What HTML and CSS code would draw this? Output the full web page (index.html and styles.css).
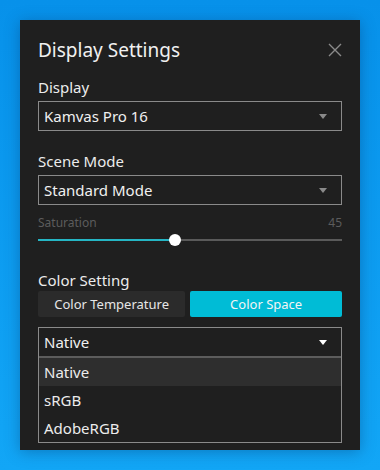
FILE: index.html
```html
<!DOCTYPE html>
<html lang="en">
<head>
    <meta charset="UTF-8">
    <title>Display Settings</title>
    <link rel="stylesheet" href="styles.css">
</head>
<body>
    <div class="panel">
        <header class="panel-header">
            <h1>Display Settings</h1>
            <button class="close-btn" aria-label="Close">
                <svg width="14" height="14" viewBox="0 0 14 14">
                    <path d="M1 1 L13 13 M13 1 L1 13" stroke="#8a8a8a" stroke-width="1.4" fill="none"/>
                </svg>
            </button>
        </header>

        <section class="group">
            <div class="label">Display</div>
            <div class="select">
                <span>Kamvas Pro 16</span>
                <span class="arrow"></span>
            </div>
        </section>

        <section class="group">
            <div class="label">Scene Mode</div>
            <div class="select">
                <span>Standard Mode</span>
                <span class="arrow"></span>
            </div>
            <div class="slider-head">
                <span>Saturation</span>
                <span>45</span>
            </div>
            <div class="slider">
                <div class="slider-fill" style="width: 45%"></div>
                <div class="slider-thumb" style="left: 45%"></div>
            </div>
        </section>

        <section class="group color-group">
            <div class="label">Color Setting</div>
            <div class="tabs">
                <button class="tab">Color Temperature</button>
                <button class="tab active">Color Space</button>
            </div>
            <div class="dropdown">
                <div class="select open">
                    <span>Native</span>
                    <span class="arrow"></span>
                </div>
                <ul class="options">
                    <li class="selected">Native</li>
                    <li>sRGB</li>
                    <li>AdobeRGB</li>
                </ul>
            </div>
        </section>
    </div>
</body>
</html>
```

FILE: styles.css
```css
/* Global */
body {
    margin: 0;
    width: 380px;
    height: 470px;
    padding: 20px;
    box-sizing: border-box;
    background: linear-gradient(180deg, #0791ea 0%, #12a6f6 100%);
    font-family: 'Noto Sans', 'Open Sans', sans-serif;
    color: #e6e6e6;
    overflow: hidden;
}

.panel {
    width: 340px;
    height: 430px;
    box-sizing: border-box;
    padding: 13px 18px 0;
    background-color: #1f1f1f;
    box-shadow: 0 2px 14px rgba(0, 40, 90, 0.35);
}

/* Header */
.panel-header {
    display: flex;
    justify-content: space-between;
    align-items: center;
    height: 34px;
    margin-bottom: 10px;
}

.panel-header h1 {
    margin: 0;
    font-size: 19px;
    font-weight: normal;
    color: #f0f0f0;
}

.close-btn {
    background: none;
    border: none;
    padding: 0;
    width: 14px;
    height: 14px;
    cursor: pointer;
}

/* Groups */
.group {
    margin-bottom: 20px;
}

.label {
    font-size: 15px;
    line-height: 20px;
    margin-bottom: 4px;
    color: #ececec;
}

.select {
    display: flex;
    justify-content: space-between;
    align-items: center;
    height: 30px;
    box-sizing: border-box;
    padding: 0 14px 0 5px;
    border: 1px solid #8a8a8a;
    font-size: 15px;
    color: #f0f0f0;
}

.arrow {
    width: 0;
    height: 0;
    border-left: 4px solid transparent;
    border-right: 4px solid transparent;
    border-top: 5px solid #8a8a8a;
}

.select.open .arrow {
    border-top-color: #ffffff;
}

/* Slider */
.slider-head {
    display: flex;
    justify-content: space-between;
    margin-top: 10px;
    font-size: 12px;
    line-height: 16px;
    color: #5c5c5c;
}

.slider {
    position: relative;
    height: 2px;
    margin: 8px 0 0;
    background-color: #5a5a5a;
}

.slider-fill {
    height: 100%;
    background-color: #25b5c4;
}

.slider-thumb {
    position: absolute;
    top: -5px;
    width: 12px;
    height: 12px;
    margin-left: -6px;
    border-radius: 50%;
    background-color: #ffffff;
}

.color-group {
    padding-top: 9px;
}

/* Tabs */
.tabs {
    display: flex;
    gap: 5px;
    margin-top: -3px;
    margin-bottom: 10px;
}

.tab {
    flex: 147;
    height: 26px;
    border: none;
    border-radius: 2px;
    background-color: #2b2b2b;
    color: #e6e6e6;
    font-family: inherit;
    font-size: 13px;
}

.tab.active {
    flex: 152;
    background-color: #00bcd6;
    color: #f4f4f4;
}

/* Dropdown */
.dropdown {
    border: 1px solid #8a8a8a;
}

.dropdown .select {
    border: none;
    border-bottom: 2px solid #5c5c5c;
}

.options {
    list-style: none;
    margin: 0;
    padding: 0;
}

.options li {
    height: 28px;
    line-height: 28px;
    padding-left: 5px;
    font-size: 15px;
    color: #ececec;
}

.options li.selected {
    background-color: #2e2e2e;
}
```
